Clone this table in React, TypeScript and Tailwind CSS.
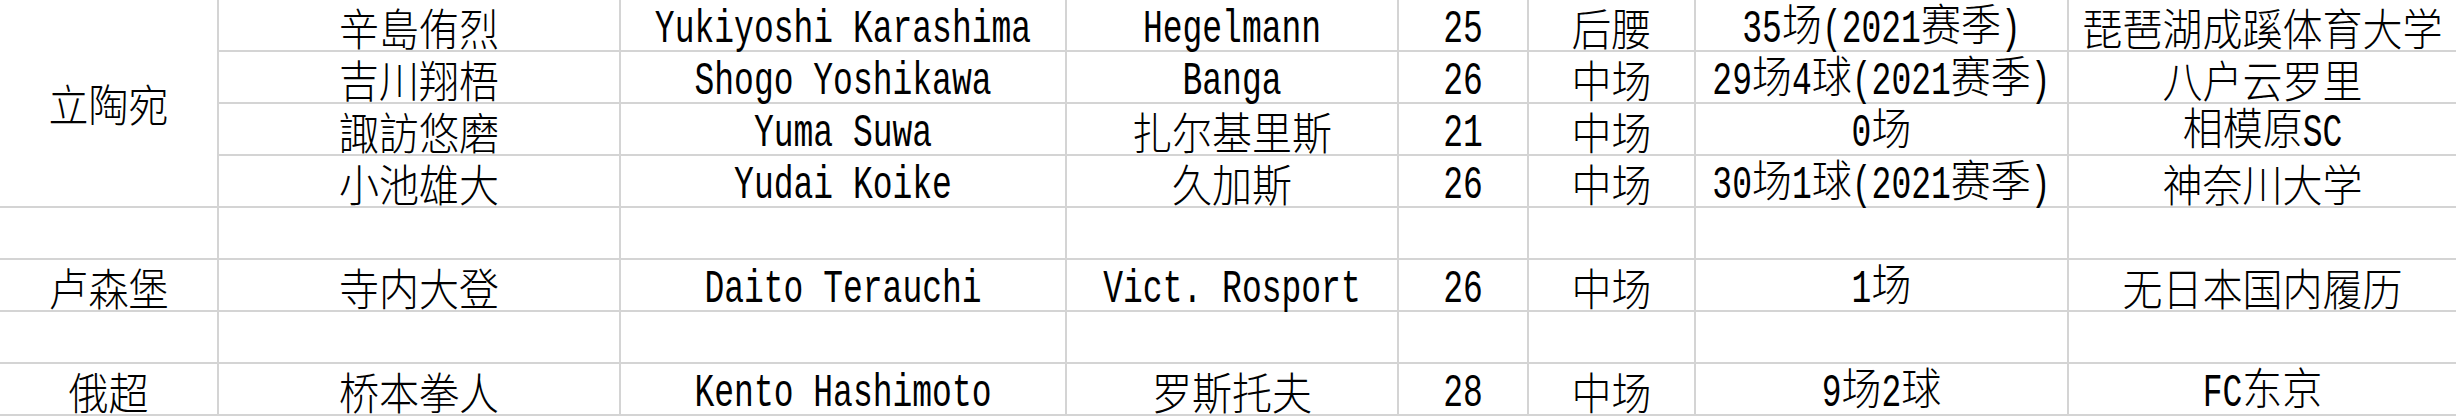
import React from "react";

type Row = string[];

const lithuania: Row[] = [
  ["辛島侑烈", "Yukiyoshi Karashima", "Hegelmann", "25", "后腰", "35场(2021赛季)", "琵琶湖成蹊体育大学"],
  ["吉川翔梧", "Shogo Yoshikawa", "Banga", "26", "中场", "29场4球(2021赛季)", "八户云罗里"],
  ["諏訪悠磨", "Yuma Suwa", "扎尔基里斯", "21", "中场", "0场", "相模原SC"],
  ["小池雄大", "Yudai Koike", "久加斯", "26", "中场", "30场1球(2021赛季)", "神奈川大学"],
];

const luxembourg: Row = ["卢森堡", "寺内大登", "Daito Terauchi", "Vict. Rosport", "26", "中场", "1场", "无日本国内履历"];
const russia: Row = ["俄超", "桥本拳人", "Kento Hashimoto", "罗斯托夫", "28", "中场", "9场2球", "FC东京"];

// latin runs are set in a mono face, squeezed to half an ideograph and stretched tall
function Txt({ s }: { s: string }) {
  const parts = s.split(/([\x20-\x7E]+)/).filter((p) => p !== "");
  return (
    <span>
      {parts.map((p, i) =>
        /^[\x20-\x7E]+$/.test(p) ? (
          <span
            key={i}
            className="inline-block whitespace-pre text-[33px] leading-none scale-y-140 font-['Liberation_Mono',monospace]"
          >
            {p}
          </span>
        ) : (
          <span key={i} className="inline-block scale-y-110 font-light">
            {p}
          </span>
        )
      )}
    </span>
  );
}

function Cell({ text, last, middle }: { text?: string; last?: boolean; middle?: boolean }) {
  return (
    <div
      className={`flex justify-center whitespace-nowrap border-b-2 border-[#d4d4d4] ${
        middle ? "items-center" : "items-end pb-[3px]"
      } ${last ? "" : "border-r-2"}`}
    >
      {text ? <Txt s={text} /> : null}
    </div>
  );
}

function Blank() {
  return (
    <>
      {Array.from({ length: 8 }).map((_, i) => (
        <Cell key={i} last={i === 7} />
      ))}
    </>
  );
}

export default function App() {
  return (
    <div className="w-[2456px] h-[416px] overflow-hidden bg-white text-black">
      <div className="grid grid-cols-[219px_402px_446px_332px_130px_167px_373px_387px] grid-rows-[repeat(8,52px)] text-[40px] leading-none font-['Noto_Sans_CJK_SC',sans-serif]">
        <div className="row-span-4 flex items-center justify-center border-r-2 border-b-2 border-[#d4d4d4]">
          <Txt s="立陶宛" />
        </div>
        {lithuania.map((row, r) =>
          row.map((c, i) => <Cell key={`${r}-${i}`} text={c} last={i === row.length - 1} />)
        )}

        <Blank />
        {luxembourg.map((c, i) => (
          <Cell key={`lu-${i}`} text={c} last={i === 7} />
        ))}
        <Blank />
        {russia.map((c, i) => (
          <Cell key={`ru-${i}`} text={c} last={i === 7} />
        ))}
      </div>
    </div>
  );
}
